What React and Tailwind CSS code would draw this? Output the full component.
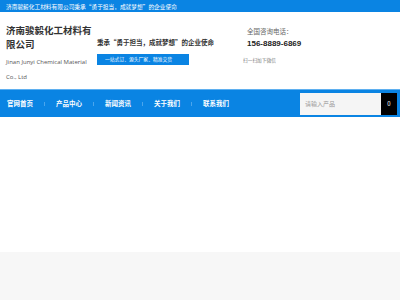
import React from 'react';

const navItems = ['官网首页', '产品中心', '新闻资讯', '关于我们', '联系我们'];

const App = () => {
    return (
        <div className="w-[400px] h-[300px] bg-white flex flex-col overflow-hidden" style={{ fontFamily: '"Noto Sans CJK SC", "Liberation Sans", sans-serif' }}>
            <div className="h-[12px] bg-[#0a84e3] text-white pl-[6px] whitespace-nowrap flex items-center overflow-hidden">
                <span className="inline-block text-[11.4px] leading-[12px] scale-50 origin-left">
                    济南骏毅化工材料有限公司秉承“勇于担当，成就梦想”的企业使命
                </span>
            </div>

            <div className="h-[77px] flex">
                <div className="w-[91px] pl-[6px] pt-[11px]">
                    <div className="w-[86px] text-[9.5px] leading-[14px] font-bold text-[#333]">济南骏毅化工材料有限公司</div>
                    <div className="text-[6px] leading-[15px] text-[#555] mt-[4px] whitespace-nowrap" style={{ fontFamily: '"Open Sans", "Noto Sans CJK SC", sans-serif' }}>
                        Jinan Junyi Chemical Material
                        <br />
                        Co., Ltd
                    </div>
                </div>
                <div className="w-[146px] pl-[6px] pt-[24px]">
                    <div className="text-[6.5px] leading-[12px] font-bold text-[#333] whitespace-nowrap">秉承“勇于担当，成就梦想”的企业使命</div>
                    <div className="mt-[6px] w-[92px] h-[11px] bg-[#0a84e3] text-white pl-[8px] whitespace-nowrap flex items-center overflow-hidden">
                        <span className="inline-block text-[9.6px] scale-50 origin-left">一站式订、源头厂家、精准交货</span>
                    </div>
                </div>
                <div className="pt-[13px] pl-[6px]">
                    <div className="text-[6.5px] leading-[12px] text-[#666] pl-[4px]">全国咨询电话：</div>
                    <div className="text-[8px] leading-[14px] font-bold text-[#222] pl-[4px]" style={{ fontFamily: '"Liberation Sans", sans-serif' }}>156-8889-6869</div>
                    <div className="h-[8px] mt-[5px] flex items-center whitespace-nowrap">
                        <span className="inline-block text-[9.4px] text-[#777] scale-50 origin-left">扫一扫加下微信</span>
                    </div>
                </div>
            </div>

            <div className="h-[1px] bg-[#5fb0f0]"></div>
            <div className="h-[27px] bg-[#0a84e3] flex items-center">
                <div className="flex items-center pl-[7px]">
                    {navItems.map((item, i) => (
                        <React.Fragment key={item}>
                            {i > 0 && <div className="w-[1px] h-[4px] bg-[#4aa5ec] mx-[11px]"></div>}
                            <span className="text-white text-[6.5px] font-bold w-[26px] whitespace-nowrap">{item}</span>
                        </React.Fragment>
                    ))}
                </div>
                <div className="ml-auto flex mr-[3px]">
                    <div className="w-[81px] h-[22px] bg-[#f5f5f5] text-[6px] leading-[22px] text-[#999] pl-[5px]">请输入产品</div>
                    <div className="w-[16px] h-[22px] bg-black text-white text-[6px] leading-[22px] text-center">0</div>
                </div>
            </div>

            <div className="h-[135px] bg-white"></div>
            <div className="flex-1 bg-[#f7f7f7]"></div>
        </div>
    );
};

export default App;
